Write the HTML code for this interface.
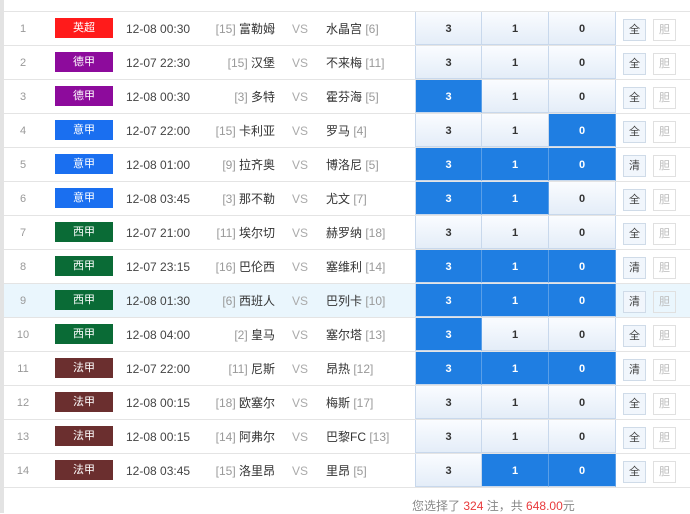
<!DOCTYPE html>
<html><head><meta charset="utf-8"><style>
*{margin:0;padding:0;box-sizing:border-box}
body{width:690px;height:513px;background:#fff;font-family:"Liberation Sans","Noto Sans CJK SC",sans-serif;position:relative;overflow:hidden;font-size:12px;color:#333}
.lb{position:absolute;left:0;top:0;width:4px;height:513px;background:#e3e3e3}
.top{position:absolute;left:4px;top:11px;width:686px;height:1px;background:#e4e4e4}
.row{position:absolute;left:4px;width:686px;height:34px;border-bottom:1px solid #e4e4e4}
.row.hl{background:#eaf6fd}
.row div{position:absolute;top:0;height:33px;line-height:35px}
.n{left:0;width:38px;text-align:center;color:#999;font-size:11px}
.b{left:51px;width:58px;top:6px!important;height:20px!important;line-height:20px!important;color:#fff;text-align:center;font-size:11px}
.t{left:122px;color:#444}
.h{right:415px;text-align:right;color:#333}
.g{color:#999}
.vs{left:288px;color:#aaa}
.a{left:322px;color:#333}
.c{width:67px;text-align:center;font-weight:bold;font-size:11px;color:#333;background:linear-gradient(#fafcff,#e4edf8);border-right:1px solid #c8d8ec;border-bottom:1px solid #c8d8ec}
.c.s{background:#1f7ee2;color:#fff;border-right:1px solid #5a9fe8}
.c1{left:411px;border-left:1px solid #c8d8ec}.c2{left:478px}.c3{left:545px}
.q{left:619px;width:23px;top:7px!important;height:22px!important;line-height:21px!important;border:1px solid #cfdbe8;background:#f1f6fc;text-align:center;font-size:11px;color:#444}
.d{left:649px;width:23px;top:7px!important;height:22px!important;line-height:21px!important;border:1px solid #e0e0e0;text-align:center;font-size:11px;color:#bbb}
.foot{position:absolute;left:412px;top:497px;font-size:12px;color:#888}
.foot span{color:#e8393b}
</style></head><body>
<div class="lb"></div><div class="top"></div>

<div class="row" style="top:12px"><div class="n">1</div><div class="b" style="background:#ff1b1b">英超</div><div class="t">12-08 00:30</div><div class="h"><span class="g">[15]</span> 富勒姆</div><div class="vs">VS</div><div class="a">水晶宫 <span class="g">[6]</span></div><div class="c c1">3</div><div class="c c2">1</div><div class="c c3">0</div><div class="q">全</div><div class="d">胆</div></div>
<div class="row" style="top:46px"><div class="n">2</div><div class="b" style="background:#8d0b9c">德甲</div><div class="t">12-07 22:30</div><div class="h"><span class="g">[15]</span> 汉堡</div><div class="vs">VS</div><div class="a">不来梅 <span class="g">[11]</span></div><div class="c c1">3</div><div class="c c2">1</div><div class="c c3">0</div><div class="q">全</div><div class="d">胆</div></div>
<div class="row" style="top:80px"><div class="n">3</div><div class="b" style="background:#8d0b9c">德甲</div><div class="t">12-08 00:30</div><div class="h"><span class="g">[3]</span> 多特</div><div class="vs">VS</div><div class="a">霍芬海 <span class="g">[5]</span></div><div class="c c1 s">3</div><div class="c c2">1</div><div class="c c3">0</div><div class="q">全</div><div class="d">胆</div></div>
<div class="row" style="top:114px"><div class="n">4</div><div class="b" style="background:#1a6ff0">意甲</div><div class="t">12-07 22:00</div><div class="h"><span class="g">[15]</span> 卡利亚</div><div class="vs">VS</div><div class="a">罗马 <span class="g">[4]</span></div><div class="c c1">3</div><div class="c c2">1</div><div class="c c3 s">0</div><div class="q">全</div><div class="d">胆</div></div>
<div class="row" style="top:148px"><div class="n">5</div><div class="b" style="background:#1a6ff0">意甲</div><div class="t">12-08 01:00</div><div class="h"><span class="g">[9]</span> 拉齐奥</div><div class="vs">VS</div><div class="a">博洛尼 <span class="g">[5]</span></div><div class="c c1 s">3</div><div class="c c2 s">1</div><div class="c c3 s">0</div><div class="q">清</div><div class="d">胆</div></div>
<div class="row" style="top:182px"><div class="n">6</div><div class="b" style="background:#1a6ff0">意甲</div><div class="t">12-08 03:45</div><div class="h"><span class="g">[3]</span> 那不勒</div><div class="vs">VS</div><div class="a">尤文 <span class="g">[7]</span></div><div class="c c1 s">3</div><div class="c c2 s">1</div><div class="c c3">0</div><div class="q">全</div><div class="d">胆</div></div>
<div class="row" style="top:216px"><div class="n">7</div><div class="b" style="background:#0a6b36">西甲</div><div class="t">12-07 21:00</div><div class="h"><span class="g">[11]</span> 埃尔切</div><div class="vs">VS</div><div class="a">赫罗纳 <span class="g">[18]</span></div><div class="c c1">3</div><div class="c c2">1</div><div class="c c3">0</div><div class="q">全</div><div class="d">胆</div></div>
<div class="row" style="top:250px"><div class="n">8</div><div class="b" style="background:#0a6b36">西甲</div><div class="t">12-07 23:15</div><div class="h"><span class="g">[16]</span> 巴伦西</div><div class="vs">VS</div><div class="a">塞维利 <span class="g">[14]</span></div><div class="c c1 s">3</div><div class="c c2 s">1</div><div class="c c3 s">0</div><div class="q">清</div><div class="d">胆</div></div>
<div class="row hl" style="top:284px"><div class="n">9</div><div class="b" style="background:#0a6b36">西甲</div><div class="t">12-08 01:30</div><div class="h"><span class="g">[6]</span> 西班人</div><div class="vs">VS</div><div class="a">巴列卡 <span class="g">[10]</span></div><div class="c c1 s">3</div><div class="c c2 s">1</div><div class="c c3 s">0</div><div class="q">清</div><div class="d">胆</div></div>
<div class="row" style="top:318px"><div class="n">10</div><div class="b" style="background:#0a6b36">西甲</div><div class="t">12-08 04:00</div><div class="h"><span class="g">[2]</span> 皇马</div><div class="vs">VS</div><div class="a">塞尔塔 <span class="g">[13]</span></div><div class="c c1 s">3</div><div class="c c2">1</div><div class="c c3">0</div><div class="q">全</div><div class="d">胆</div></div>
<div class="row" style="top:352px"><div class="n">11</div><div class="b" style="background:#6b2f2f">法甲</div><div class="t">12-07 22:00</div><div class="h"><span class="g">[11]</span> 尼斯</div><div class="vs">VS</div><div class="a">昂热 <span class="g">[12]</span></div><div class="c c1 s">3</div><div class="c c2 s">1</div><div class="c c3 s">0</div><div class="q">清</div><div class="d">胆</div></div>
<div class="row" style="top:386px"><div class="n">12</div><div class="b" style="background:#6b2f2f">法甲</div><div class="t">12-08 00:15</div><div class="h"><span class="g">[18]</span> 欧塞尔</div><div class="vs">VS</div><div class="a">梅斯 <span class="g">[17]</span></div><div class="c c1">3</div><div class="c c2">1</div><div class="c c3">0</div><div class="q">全</div><div class="d">胆</div></div>
<div class="row" style="top:420px"><div class="n">13</div><div class="b" style="background:#6b2f2f">法甲</div><div class="t">12-08 00:15</div><div class="h"><span class="g">[14]</span> 阿弗尔</div><div class="vs">VS</div><div class="a">巴黎FC <span class="g">[13]</span></div><div class="c c1">3</div><div class="c c2">1</div><div class="c c3">0</div><div class="q">全</div><div class="d">胆</div></div>
<div class="row" style="top:454px"><div class="n">14</div><div class="b" style="background:#6b2f2f">法甲</div><div class="t">12-08 03:45</div><div class="h"><span class="g">[15]</span> 洛里昂</div><div class="vs">VS</div><div class="a">里昂 <span class="g">[5]</span></div><div class="c c1">3</div><div class="c c2 s">1</div><div class="c c3 s">0</div><div class="q">全</div><div class="d">胆</div></div>

<div class="foot">您选择了 <span>324</span> 注，共 <span>648.00</span>元</div>
</body></html>
